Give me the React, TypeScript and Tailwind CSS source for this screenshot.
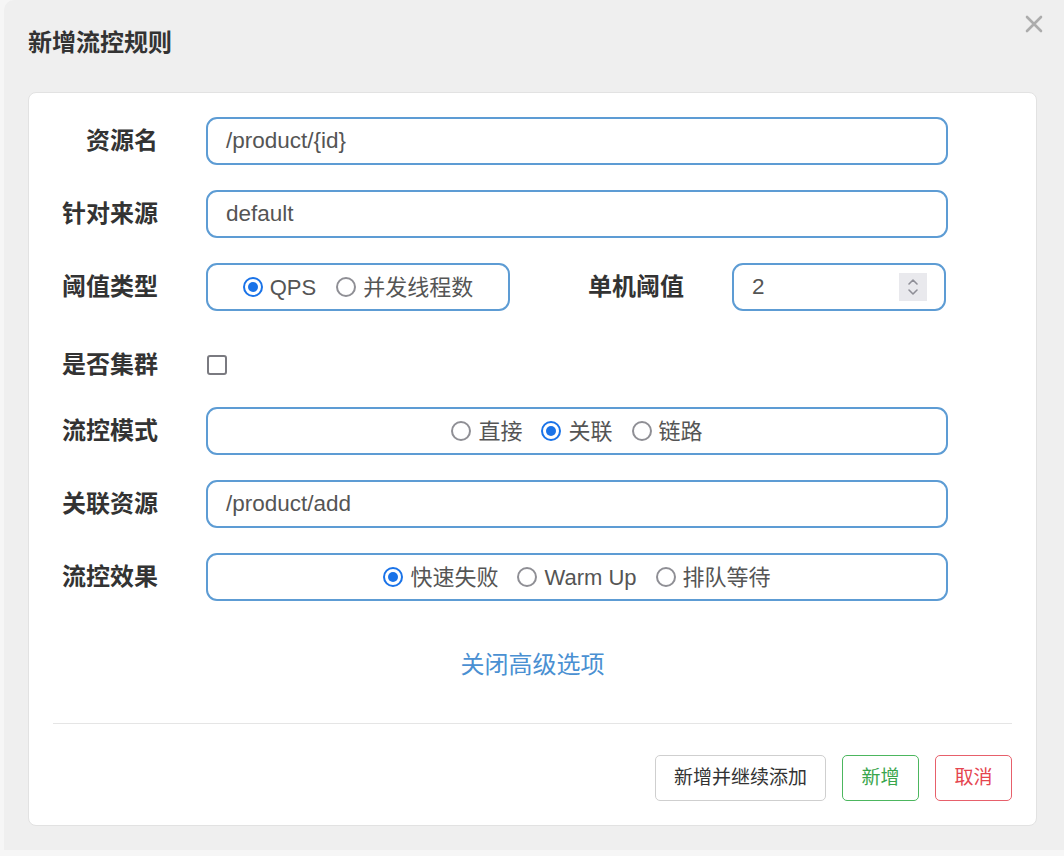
import React from "react"

const FONT = { fontFamily: '"Liberation Sans", "Noto Sans CJK SC", sans-serif' }

function Radio({ checked, label }: { checked?: boolean; label: string }) {
  return (
    <label className="flex items-center gap-[7px]">
      {checked ? (
        <span className="w-[20px] h-[20px] rounded-full border-[2px] border-[#1a73e8] flex items-center justify-center">
          <span className="w-[10px] h-[10px] rounded-full bg-[#1a73e8]" />
        </span>
      ) : (
        <span className="w-[20px] h-[20px] rounded-full border-[2px] border-[#8f8f95]" />
      )}
      <span>{label}</span>
    </label>
  )
}

function Label({ children }: { children: React.ReactNode }) {
  return <div className="w-[129px] shrink-0 text-right text-[24px] font-bold text-[#333]">{children}</div>
}

const boxCls = "h-[48px] border-[2px] border-[#5d9cd4] rounded-[11px] bg-white flex items-center text-[#555]"

export default function App() {
  return (
    <div className="bg-[#f6f6f6] w-[1064px] h-[856px] overflow-hidden" style={FONT}>
      <div className="ml-[4px] h-[850px] bg-[#efefef] rounded-tl-[10px] relative">
        <button className="absolute right-[20px] top-[14px] text-[#acacac]">
          <svg width="20" height="20" viewBox="0 0 20 20" stroke="currentColor" strokeWidth="2.6" strokeLinecap="round">
            <path d="M3 3 L17 17 M17 3 L3 17" />
          </svg>
        </button>
        <div className="pl-[24px] pt-[25px] h-[92px] text-[24px] font-bold text-[#333]">新增流控规则</div>

        <div className="ml-[24px] w-[1009px] bg-white border border-[#e2e2e2] rounded-[8px] pt-[24px] pb-[24px]">
          <div className="flex items-center gap-[48px]">
            <Label>资源名</Label>
            <div className={`${boxCls} w-[742px] pl-[18px] text-[22.5px]`}>/product/{"{id}"}</div>
          </div>

          <div className="flex items-center gap-[48px] mt-[25px]">
            <Label>针对来源</Label>
            <div className={`${boxCls} w-[742px] pl-[18px] text-[22.5px]`}>default</div>
          </div>

          <div className="flex items-center gap-[48px] mt-[25px]">
            <Label>阈值类型</Label>
            <div className={`${boxCls} w-[304px] justify-center gap-[20px] text-[22px]`}>
              <Radio checked label="QPS" />
              <Radio label="并发线程数" />
            </div>
            <div className="w-[96px] ml-[30px] text-right text-[24px] font-bold text-[#333]">单机阈值</div>
            <div className={`${boxCls} w-[214px] pl-[18px] pr-[17px] justify-between text-[22.5px]`}>
              <span>2</span>
              <span className="w-[28px] h-[28px] bg-[#e9e9ed] flex items-center justify-center">
                <svg width="14" height="20" viewBox="0 0 14 20" fill="none" stroke="#8f8f97" strokeWidth="1.6" strokeLinecap="round" strokeLinejoin="round">
                  <path d="M3 7 L7 3 L11 7" />
                  <path d="M3 13 L7 17 L11 13" />
                </svg>
              </span>
            </div>
          </div>

          <div className="flex items-center gap-[48px] mt-[30px] h-[48px]">
            <Label>是否集群</Label>
            <span className="w-[20px] h-[20px] ml-[1px] rounded-[3px] border-[2px] border-[#7a7a80] bg-white" />
          </div>

          <div className="flex items-center gap-[48px] mt-[18px]">
            <Label>流控模式</Label>
            <div className={`${boxCls} w-[742px] justify-center gap-[19px] text-[22px]`}>
              <Radio label="直接" />
              <Radio checked label="关联" />
              <Radio label="链路" />
            </div>
          </div>

          <div className="flex items-center gap-[48px] mt-[25px]">
            <Label>关联资源</Label>
            <div className={`${boxCls} w-[742px] pl-[18px] text-[22.5px]`}>/product/add</div>
          </div>

          <div className="flex items-center gap-[48px] mt-[25px]">
            <Label>流控效果</Label>
            <div className={`${boxCls} w-[742px] justify-center gap-[19px] text-[22px]`}>
              <Radio checked label="快速失败" />
              <Radio label="Warm Up" />
              <Radio label="排队等待" />
            </div>
          </div>

          <div className="mt-[46px] h-[36px] flex items-center justify-center text-[24px] text-[#4a90d2]">
            关闭高级选项
          </div>

          <div className="mx-[24px] mt-[40px] border-t border-[#e5e5e5]" />

          <div className="flex justify-end gap-[16px] mx-[24px] mt-[31px]">
            <button className="h-[46px] px-[18px] w-[171px] border border-[#cfcfcf] rounded-[5px] text-[19px] text-[#333] bg-white">新增并继续添加</button>
            <button className="h-[46px] w-[77px] border border-[#4cb65e] rounded-[5px] text-[19px] text-[#3aa64c] bg-white">新增</button>
            <button className="h-[46px] w-[77px] border border-[#e7606b] rounded-[5px] text-[19px] text-[#e5454f] bg-white">取消</button>
          </div>
        </div>
      </div>
    </div>
  )
}
